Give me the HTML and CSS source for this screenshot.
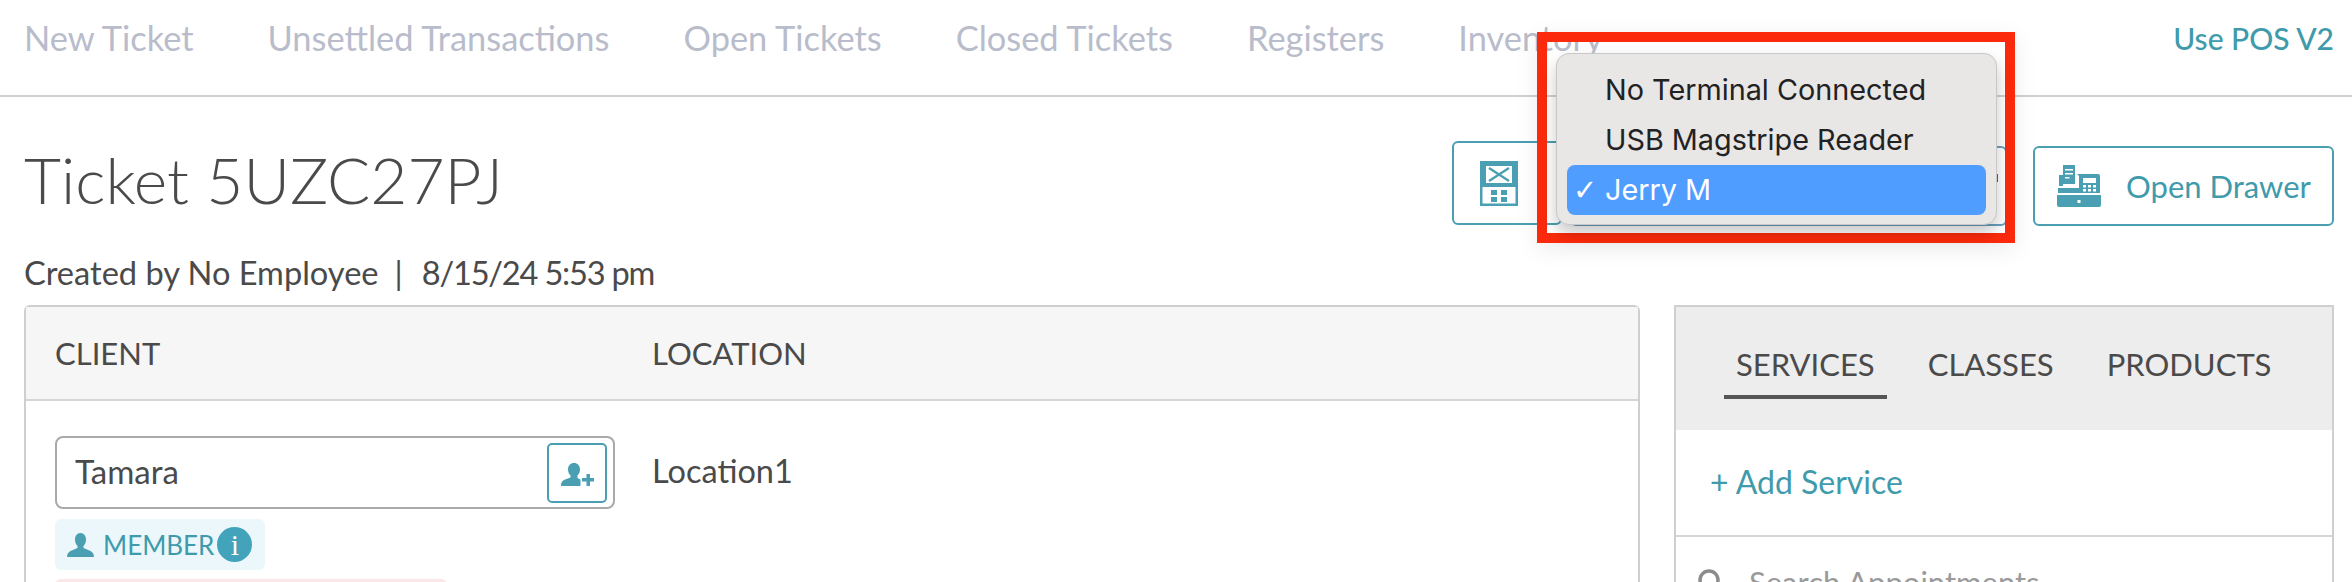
FILE: index.html
```html
<!DOCTYPE html>
<html lang="en">
<head>
  <meta charset="UTF-8">
  <title>Ticket 5UZC27PJ</title>
  <link rel="stylesheet" href="styles.css">
</head>
<body>
  <nav class="topnav">
    <div class="nav-links">
      <a>New Ticket</a>
      <a>Unsettled Transactions</a>
      <a>Open Tickets</a>
      <a>Closed Tickets</a>
      <a>Registers</a>
      <a>Inventory</a>
    </div>
    <a class="nav-v2">Use POS V2</a>
  </nav>

  <main class="page">
    <div class="title-row">
      <h1>Ticket 5UZC27PJ</h1>
      <div class="actions">
        <button class="btn btn-term">
          <svg class="icon-term" viewBox="0 0 38 45">
            <path fill="#4a9fb2" fill-rule="evenodd" d="M0 0h38v45H0zM6 5v17h26V5zM2.500 26v16.500h33V26z"/>
            <path fill="#4a9fb2" d="M11 29h6v5h-6zM21 29h6v5h-6zM11 36h6v5h-6zM21 36h6v5h-6z"/>
            <path fill="none" stroke="#4a9fb2" stroke-width="2.400" d="M9 7l20 13M29 7L9 20"/>
          </svg>
        </button>
        <div class="term-select"><span class="chevron"></span></div>
        <button class="btn btn-drawer">
          <svg class="icon-drawer" viewBox="0 0 44 42">
            <path fill="#4a9fb2" d="M6 0h12v19H6zM0 30h44v10a2 2 0 0 1-2 2H2a2 2 0 0 1-2-2z"/>
            <path fill="#4a9fb2" fill-rule="evenodd" d="M2 10h4v11H2zM20 9h21a2 2 0 0 1 2 2v17H1v-5h21V11zM26 13v5h13v-5zM26 20v2.500h3V20zM31 20v2.500h3V20zM36 20v2.500h3V20zM26 24v2.500h3V24zM31 24v2.500h3V24zM36 24v2.500h3V24z"/>
            <path fill="#fff" d="M8 4h8v1.500H8zM8 8h8v1.500H8zM8 12h4.500v1.500H8zM20.500 35h3v3h-3z"/>
          </svg>
          <span>Open Drawer</span>
        </button>
      </div>
    </div>
    <p class="created">Created by No Employee<span class="sep">|</span><span class="created-date">8/15/24 5:53 pm</span></p>

    <div class="columns">
      <section class="panel panel-main">
        <div class="panel-head">
          <div class="col-client">CLIENT</div>
          <div>LOCATION</div>
        </div>
        <div class="panel-body">
          <div class="col-client">
            <div class="client-input">
              <span class="client-name">Tamara</span>
              <button class="btn-add">
                <svg class="icon-add" viewBox="0 0 33 23">
                  <path fill="#4a9fb2" d="M13 0c3.500 0 6 2.500 6 6.500 0 2.500-1 4.500-2.500 6V15l3 1.500V23H0c0-4 1.500-5.500 4-6.500l5.500-2v-2C8 11 7 9 7 6.500 7 2.500 9.500 0 13 0z"/>
                  <path fill="#4a9fb2" d="M25.500 11H29v4h4v3.500h-4V23h-3.500v-4.500H21V15h4.500z"/>
                </svg>
              </button>
            </div>
            <div class="chip-member">
              <svg class="icon-person" viewBox="0 0 27 24">
                <path fill="#4a9fb2" d="M13.500 0c3.500 0 5.500 3 5.500 6.500 0 3-1 5-2.500 6.500v2l7 3c2 1 3.500 3 3.500 6H0c0-3 1.500-5 3.500-6l7-3v-2C9 11.500 8 9.500 8 6.500 8 3 10 0 13.500 0z"/>
              </svg>
              <span>MEMBER</span>
              <i class="info">i</i>
            </div>
            <div class="chip-alert"></div>
          </div>
          <div class="location">Location1</div>
        </div>
      </section>

      <aside class="panel panel-side">
        <div class="tabs">
          <a class="tab active">SERVICES</a>
          <a class="tab">CLASSES</a>
          <a class="tab">PRODUCTS</a>
        </div>
        <div class="add-service">+ Add Service</div>
        <div class="search">
          <svg class="icon-search" viewBox="0 0 26 26">
            <circle cx="11" cy="11" r="9" fill="none" stroke="#8c8c8c" stroke-width="3.500"/>
            <path stroke="#8c8c8c" stroke-width="3.500" d="M17 17l8 8"/>
          </svg>
          <span>Search Appointments</span>
        </div>
      </aside>
    </div>
  </main>

  <!-- annotation box + open native menu -->
  <div class="callout">
    <ul class="menu">
      <li>No Terminal Connected</li>
      <li>USB Magstripe Reader</li>
      <li class="selected"><b>✓</b>Jerry M</li>
    </ul>
  </div>
</body>
</html>
```

FILE: styles.css
```css
* {
  margin: 0;
  padding: 0;
  box-sizing: border-box;
}

html, body {
  height: 582px;
  overflow: hidden;
}

body {
  position: relative;
  font-family: Lato, 'Open Sans', sans-serif;
  background: #fff;
  color: #4a4a4a;
}

/* top nav */
.topnav {
  display: flex;
  justify-content: space-between;
  height: 97px;
  padding: 18px 18px 0 24px;
  border-bottom: 2px solid #cfcfd2;
  font-size: 34.4px;
  line-height: 40px;
}

.nav-links {
  display: flex;
  gap: 74px;
  color: #b9bccb;
}

.nav-v2 {
  color: #3f9bac;
  font-weight: 500;
  font-size: 30px;
}

/* page */
.page {
  padding: 0 18px 0 24px;
}

.title-row {
  display: flex;
  justify-content: space-between;
  height: 130px;
}

h1 {
  font-size: 64px;
  font-weight: 300;
  line-height: 74px;
  padding-top: 46px;
  height: 130px;
}

.actions {
  display: flex;
  align-items: flex-start;
}

.btn {
  display: flex;
  align-items: center;
  background: #fff;
  border: 2px solid #4a9fb2;
  border-radius: 6px;
  color: #3f9bac;
  font-family: inherit;
}

.btn-term {
  width: 110px;
  height: 84px;
  margin-top: 44px;
  padding-left: 26px;
}

.icon-term {
  width: 38px;
  height: 45px;
}

.term-select {
  display: flex;
  align-items: center;
  justify-content: flex-end;
  width: 437px;
  height: 80px;
  margin: 49px 26px 0 8px;
  padding-right: 7px;
  border: 2px solid #6a9fc0;
  border-radius: 6px;
}

.chevron {
  width: 3px;
  height: 8px;
  margin-top: -16px;
  background: #4b6a78;
}

.btn-drawer {
  width: 301px;
  height: 80px;
  margin-top: 49px;
  padding-left: 22px;
  font-size: 31px;
}

.icon-drawer {
  width: 44px;
  height: 42px;
  margin-right: 25px;
}

.created {
  font-size: 32.6px;
  line-height: 38px;
  margin-top: 27px;
  height: 51px;
}

.sep {
  margin: 0 19px 0 16px;
}

.created-date {
  letter-spacing: -1.2px;
}

.columns {
  display: flex;
  justify-content: space-between;
}

.panel {
  border: 2px solid #cfcfcf;
  border-bottom: none;
  height: 300px;
}

.panel-main {
  width: 1616px;
  border-radius: 6px 6px 0 0;
}

.panel-head {
  display: flex;
  align-items: center;
  height: 94px;
  padding: 0 0 0 29px;
  background: #f6f6f6;
  border-bottom: 2px solid #d6d6d6;
  font-size: 31px;
}

.col-client {
  width: 597px;
}

.panel-body {
  display: flex;
  padding: 35px 0 0 29px;
}

.client-input {
  display: flex;
  justify-content: space-between;
  align-items: center;
  width: 560px;
  height: 73px;
  padding: 0 6px 0 18px;
  border: 2px solid #a9a9a9;
  border-radius: 8px;
  font-size: 33px;
}

.client-name {
  margin-top: -3px;
}

.btn-add {
  display: flex;
  align-items: center;
  justify-content: center;
  width: 60px;
  height: 60px;
  background: #fff;
  border: 2px solid #4a9fb2;
  border-radius: 5px;
}

.icon-add {
  width: 33px;
  height: 23px;
  margin-top: 4px;
}

.chip-member {
  display: inline-flex;
  align-items: center;
  width: 210px;
  height: 51px;
  margin-top: 10px;
  padding-left: 12px;
  background: #ecf7fb;
  border-radius: 6px;
  color: #3f9bac;
  font-size: 26px;
}

.icon-person {
  width: 27px;
  height: 24px;
  margin-right: 9px;
}

.info {
  display: flex;
  align-items: center;
  justify-content: center;
  width: 35px;
  height: 35px;
  margin-left: 3px;
  background: #42a3ba;
  border-radius: 50%;
  color: #fff;
  font: 400 30px 'Liberation Serif', serif;
}

.chip-alert {
  width: 392px;
  height: 30px;
  margin-top: 9px;
  background: #fbe6e8;
  border-radius: 6px;
}

.location {
  font-size: 32.5px;
  line-height: 69px;
}

/* right column */
.panel-side {
  width: 660px;
}

.tabs {
  display: flex;
  align-items: flex-start;
  gap: 29px;
  height: 123px;
  padding: 37px 0 0 48px;
  background: #ededed;
  font-size: 31px;
}

.tab {
  padding: 0 12px 11px;
  line-height: 40px;
}

.tab.active {
  border-bottom: 4px solid #555;
}

.add-service {
  height: 107px;
  padding: 0 0 0 34px;
  line-height: 104px;
  border-bottom: 2px solid #d6d6d6;
  color: #3f9bac;
  font-size: 32px;
}

.search {
  display: flex;
  align-items: center;
  gap: 25px;
  padding: 26px 0 0 22px;
  color: #9a9a9a;
  font-size: 31px;
}

.icon-search {
  width: 26px;
  height: 26px;
}

/* annotation + popup */
.callout {
  position: absolute;
  left: 1537px;
  top: 32px;
  width: 478px;
  height: 211px;
  padding: 11px 8px 8px 9px;
  border: 10px solid #fb2a0c;
  box-shadow: 0 6px 22px rgba(0,0,0,0.08);
}

.menu {
  list-style: none;
  height: 172px;
  padding: 11px 10px 0;
  background: #e9e6e6;
  border: 1px solid #c9c7c7;
  border-radius: 13px;
  box-shadow: 0 8px 16px rgba(0,0,0,0.22);
  font-family: Inter, 'Liberation Sans', sans-serif;
  font-size: 28.8px;
  color: #222;
}

.menu li {
  height: 50px;
  line-height: 50px;
  padding-left: 38px;
  border-radius: 8px;
  position: relative;
}

.menu .selected {
  background: #4f9dff;
  color: #fff;
}

.menu .selected b {
  position: absolute;
  left: 6px;
  font-family: 'DejaVu Sans', sans-serif;
  font-size: 29px;
  font-weight: 700;
}
```
